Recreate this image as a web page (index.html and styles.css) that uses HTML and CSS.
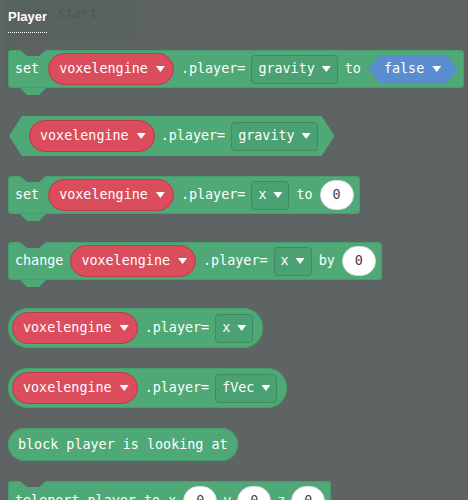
FILE: index.html
```html
<!doctype html>
<html>
<head>
    <meta charset="utf-8"/>
    <title>player blocks</title>
    <link rel="stylesheet" href="styles.css">
</head>
<body>

<div class="flyout">
    <div class="ghost"><span class="ghost-text">on start</span></div>
    <div class="ghost-arm"></div>

    <div class="label">Player</div>

    <div class="blocks">
        <div class="stmt">
            <span class="t kw">set</span>
            <span class="var dd">voxelengine</span>
            <span class="t prop">.player=</span>
            <span class="field dd">gravity</span>
            <span class="t">to</span>
            <span class="bool dd">false</span>
        </div>

        <div class="hexrep">
            <span class="var dd">voxelengine</span>
            <span class="t">.player=</span>
            <span class="field dd">gravity</span>
        </div>

        <div class="stmt">
            <span class="t kw">set</span>
            <span class="var dd">voxelengine</span>
            <span class="t prop">.player=</span>
            <span class="field dd">x</span>
            <span class="t">to</span>
            <span class="num">0</span>
        </div>

        <div class="stmt">
            <span class="t">change</span>
            <span class="var dd">voxelengine</span>
            <span class="t prop">.player=</span>
            <span class="field dd">x</span>
            <span class="t">by</span>
            <span class="num">0</span>
        </div>

        <div class="rep">
            <span class="var dd">voxelengine</span>
            <span class="t prop">.player=</span>
            <span class="field dd">x</span>
        </div>

        <div class="rep">
            <span class="var dd">voxelengine</span>
            <span class="t prop">.player=</span>
            <span class="field dd">fVec</span>
        </div>

        <div class="rep plain">
            <span class="t">block player is looking at</span>
        </div>

        <div class="stmt tight">
            <span class="t lead">teleport player to x</span>
            <span class="num">0</span>
            <span class="t">y</span>
            <span class="num">0</span>
            <span class="t">z</span>
            <span class="num">0</span>
        </div>
    </div>
</div>

</body>
</html>
```

FILE: styles.css
```css
body {
    margin: 0;
    height: 500px;
    overflow: hidden;
    background: #5e6464;
    color: #fff;
    font-family: "DejaVu Sans Mono", monospace;
    font-size: 13.4px;
}
.flyout {
    position: relative;
    padding-left: 8px;
}

/* workspace block seen behind the flyout */
.ghost {
    position: absolute;
    left: 3px;
    top: -8px;
    width: 134px;
    height: 40px;
    background: #58625f;
    border-radius: 4px;
}
.ghost-text {
    position: absolute;
    left: 30px;
    top: 6px;
    color: #4d5753;
    font-size: 13.4px;
}
.ghost-arm {
    position: absolute;
    left: 3px;
    top: 30px;
    width: 14px;
    height: 48px;
    background: #58625f;
    border-radius: 0 0 0 4px;
}

.label {
    position: relative;
    width: fit-content;
    margin-top: 8px;
    padding-bottom: 7px;
    border-bottom: 1px dotted #fff;
    font: bold 13px/17px "Liberation Sans", sans-serif;
}

.blocks {
    position: relative;
    display: flex;
    flex-direction: column;
    align-items: flex-start;
    gap: 20px;
    margin-top: 17px;
}

.t {
    white-space: pre;
    line-height: 1;
}
.kw {
    margin-right: 2px;
}
.prop {
    margin-right: -1px;
}

/* statement block with notch and tab */
.stmt {
    position: relative;
    display: flex;
    align-items: center;
    gap: 7px;
    height: 38px;
    margin-bottom: 8px;
    padding: 0 6px 0 7px;
    background: #4ea976;
    border-radius: 4px;
    box-shadow: inset 0 0 0 1px #469e6d;
}
.stmt::before {
    content: "";
    position: absolute;
    top: 0;
    left: 12px;
    width: 26px;
    height: 6px;
    background: #5e6464;
    clip-path: polygon(0 0, 100% 0, 73% 100%, 27% 100%);
}
.stmt::after {
    content: "";
    position: absolute;
    top: 100%;
    left: 12px;
    width: 26px;
    height: 7px;
    background: #4ea976;
    clip-path: polygon(0 0, 100% 0, 73% 100%, 27% 100%);
}
.stmt.tight {
    gap: 6px;
    height: 40px;
}
.stmt.tight .lead {
    margin-right: 1px;
}

/* boolean reporter */
.hexrep {
    display: flex;
    align-items: center;
    gap: 6px;
    height: 40px;
    margin-left: 1px;
    padding: 0 17px 0 20px;
    background: #4ea976;
    clip-path: polygon(13px 0, calc(100% - 13px) 0, 100% 50%, calc(100% - 13px) 100%, 13px 100%, 0 50%);
}

/* round reporter */
.rep {
    display: flex;
    align-items: center;
    gap: 7px;
    height: 40px;
    padding: 0 10px 0 4px;
    background: #4ea976;
    border-radius: 20px;
    box-shadow: inset 0 0 0 1px #469e6d;
}
.rep.plain {
    height: 33px;
    padding: 0 10px;
    border-radius: 17px;
}

/* dropdown arrow */
.dd::after {
    content: "";
    width: 9px;
    height: 6px;
    margin-left: 8px;
    background: #fff;
    clip-path: polygon(0 0, 100% 0, 50% 100%);
}

.var {
    display: flex;
    align-items: center;
    height: 32px;
    box-sizing: border-box;
    padding: 0 8px 0 10px;
    background: #db4c5c;
    border: 1px solid #b83c4a;
    border-radius: 16px;
    line-height: 1;
}

.field {
    display: flex;
    align-items: center;
    height: 29px;
    box-sizing: border-box;
    padding: 0 6px;
    background: #4aa171;
    border: 1px solid #3d8b5f;
    border-radius: 4px;
    line-height: 1;
}
.field::after {
    margin-left: 7px;
}

.bool {
    display: flex;
    align-items: center;
    height: 28px;
    padding: 0 17px 0 16px;
    background: #5a8dcf;
    line-height: 1;
    clip-path: polygon(12px 0, calc(100% - 12px) 0, 100% 50%, calc(100% - 12px) 100%, 12px 100%, 0 50%);
}

.num {
    display: flex;
    align-items: center;
    justify-content: center;
    box-sizing: border-box;
    width: 34px;
    height: 30px;
    background: #fff;
    border: 1px solid #dcdcdc;
    border-radius: 15px;
    color: #3c4148;
    line-height: 1;
}
```
